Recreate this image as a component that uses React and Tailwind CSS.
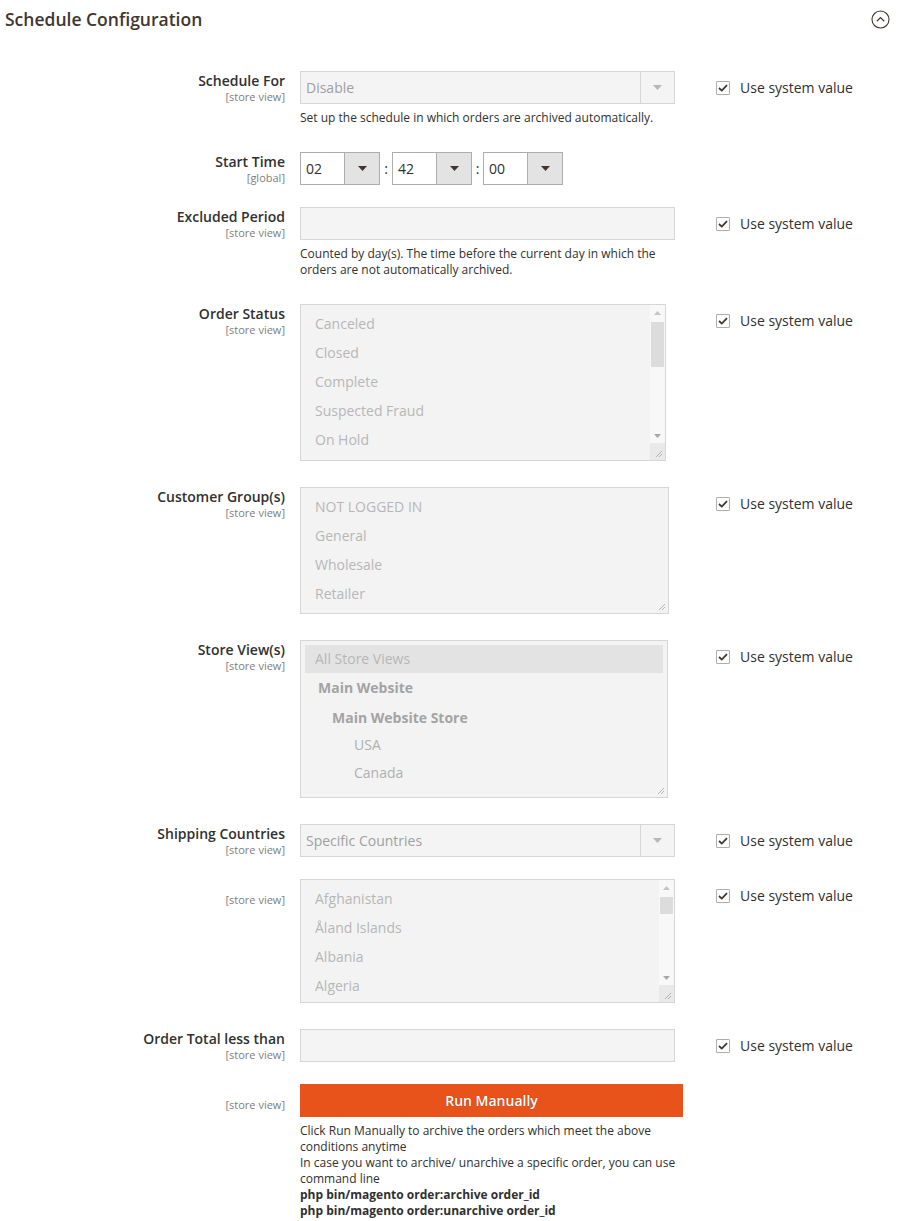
import React from 'react';

const Caret = ({ color = '#41362f', up = false }) => (
  <svg width="9" height="5" viewBox="0 0 9 5" className={up ? 'rotate-180' : ''}>
    <path d="M0 0 L9 0 L4.5 5 Z" fill={color} />
  </svg>
);

const Grip = () => (
  <svg width="9" height="9" viewBox="0 0 9 9" className="absolute bottom-[2px] right-[2px]">
    <path d="M8 2 L2 8 M8 5 L5 8" stroke="#b5b5b5" strokeWidth="1" />
  </svg>
);

const UseSystem = () => (
  <div className="ml-[33px] pt-[8px] flex items-center gap-[10px] shrink-0">
    <div className="w-[14px] h-[14px] border border-[#adadad] rounded-[1px] bg-white flex items-center justify-center">
      <svg width="10" height="8" viewBox="0 0 10 8">
        <path d="M1 4 L3.8 6.6 L9 1.2" fill="none" stroke="#41362f" strokeWidth="1.8" />
      </svg>
    </div>
    <span className="text-[14px] leading-[18px] text-[#303030]">Use system value</span>
  </div>
);

const Row = ({ label, scope, mt, check = true, children }) => (
  <div className="flex items-start" style={{ marginTop: mt }}>
    <div className="w-[285px] shrink-0 text-right pt-[1px]">
      {label ? (
        <div className="text-[14px] leading-[18px] font-semibold text-[#303030]">{label}</div>
      ) : (
        <div className="h-[13px]" />
      )}
      <div className="text-[11px] leading-[14px] text-[#808080]">[{scope}]</div>
    </div>
    <div className="ml-[15px] w-[383px] shrink-0">{children}</div>
    {check && <UseSystem />}
  </div>
);

const DisabledSelect = ({ value }) => (
  <div className="w-[375px] h-[33px] border border-[#d6d6d6] bg-[#f4f4f4] flex">
    <div className="flex-1 px-[5px] text-[14px] leading-[31px] text-[#a0a0a0]">{value}</div>
    <div className="w-[34px] border-l border-[#d6d6d6] flex items-center justify-center">
      <Caret color="#b8b8b8" />
    </div>
  </div>
);

const TimeSelect = ({ value }) => (
  <div className="w-[80px] h-[33px] border border-[#adadad] bg-white flex">
    <div className="flex-1 pl-[5px] text-[14px] leading-[31px] text-[#303030]">{value}</div>
    <div className="w-[35px] bg-[#e3e3e3] border-l border-[#adadad] flex items-center justify-center">
      <Caret color="#41362f" />
    </div>
  </div>
);

const Note = ({ children }) => (
  <div className="mt-[6px] text-[12px] leading-[16px] text-[#303030] whitespace-nowrap">{children}</div>
);

const Scrollbar = ({ thumb, thumbTop }) => (
  <div className="w-[15px] flex flex-col bg-[#f8f8f8]">
    <div className="h-[15px] flex items-center justify-center">
      <svg width="7" height="4" viewBox="0 0 7 4"><path d="M0 4 L7 4 L3.5 0 Z" fill="#c4c4c4" /></svg>
    </div>
    <div className="mx-[1px] bg-[#dcdcdc]" style={{ height: thumb, marginTop: thumbTop }} />
    <div className="flex-1" />
    <div className="h-[15px] flex items-center justify-center">
      <svg width="7" height="4" viewBox="0 0 7 4"><path d="M0 0 L7 0 L3.5 4 Z" fill="#a8a8a8" /></svg>
    </div>
    <div className="h-[17px] bg-[#e9e9e9]" />
  </div>
);

const Option = ({ children }) => (
  <div className="h-[29px] leading-[29px] pl-[14px] text-[14px] text-[#b7b7b7] whitespace-nowrap">{children}</div>
);

export default function App() {
  return (
    <div className="w-[901px] min-h-[1221px] bg-white font-['Open_Sans',sans-serif] text-[#303030]">
      <div className="h-[38px] flex items-center justify-between pl-[5px] pr-[11px]">
        <h2 className="text-[17.5px] font-semibold text-[#41362f]">Schedule Configuration</h2>
        <svg width="19" height="19" viewBox="0 0 19 19">
          <circle cx="9.5" cy="9.5" r="8.5" fill="none" stroke="#41362f" strokeWidth="1.1" />
          <path d="M5.8 11.2 L9.5 7.6 L13.2 11.2" fill="none" stroke="#41362f" strokeWidth="1.2" />
        </svg>
      </div>

      <Row label="Schedule For" scope="store view" mt={33}>
        <DisabledSelect value="Disable" />
        <Note>Set up the schedule in which orders are archived automatically.</Note>
      </Row>

      <Row label="Start Time" scope="global" mt={26} check={false}>
        <div className="flex items-center">
          <TimeSelect value="02" />
          <span className="w-[12px] text-center text-[14px]">:</span>
          <TimeSelect value="42" />
          <span className="w-[11px] text-center text-[14px]">:</span>
          <TimeSelect value="00" />
        </div>
      </Row>

      <Row label="Excluded Period" scope="store view" mt={22}>
        <div className="w-[375px] h-[33px] border border-[#d6d6d6] bg-[#f4f4f4]" />
        <Note>
          Counted by day(s). The time before the current day in which the
          <br />
          orders are not automatically archived.
        </Note>
      </Row>

      <Row label="Order Status" scope="store view" mt={26}>
        <div className="relative w-[366px] h-[157px] border border-[#d6d6d6] bg-[#f3f3f3] flex">
          <div className="flex-1 pt-[4px]">
            {['Canceled', 'Closed', 'Complete', 'Suspected Fraud', 'On Hold'].map((o) => (
              <Option key={o}>{o}</Option>
            ))}
          </div>
          <Scrollbar thumb={45} thumbTop={2} />
          <Grip />
        </div>
      </Row>

      <Row label="Customer Group(s)" scope="store view" mt={26}>
        <div className="relative w-[369px] h-[127px] border border-[#d6d6d6] bg-[#f3f3f3] pt-[4px]">
          {['NOT LOGGED IN', 'General', 'Wholesale', 'Retailer'].map((o) => (
            <Option key={o}>{o}</Option>
          ))}
          <Grip />
        </div>
      </Row>

      <Row label="Store View(s)" scope="store view" mt={26}>
        <div className="relative w-[368px] h-[158px] border border-[#d6d6d6] bg-[#f3f3f3] px-[4px] pt-[4px] text-[14px]">
          <div className="h-[28px] leading-[28px] pl-[10px] bg-[#e3e3e3] text-[#b7b7b7]">All Store Views</div>
          <div className="h-[30px] leading-[30px] pl-[13px] font-bold text-[#a3a3a3]">Main Website</div>
          <div className="h-[29px] leading-[29px] pl-[27px] font-bold text-[#a3a3a3]">Main Website Store</div>
          <div className="h-[26px] leading-[26px] pl-[49px] text-[#b0b0b0]">USA</div>
          <div className="h-[30px] leading-[30px] pl-[49px] text-[#b0b0b0]">Canada</div>
          <Grip />
        </div>
      </Row>

      <Row label="Shipping Countries" scope="store view" mt={26}>
        <DisabledSelect value="Specific Countries" />
      </Row>

      <Row label="" scope="store view" mt={22}>
        <div className="relative w-[375px] h-[124px] border border-[#d6d6d6] bg-[#f3f3f3] flex">
          <div className="flex-1 pt-[4px]">
            {['Afghanistan', 'Åland Islands', 'Albania', 'Algeria'].map((o) => (
              <Option key={o}>{o}</Option>
            ))}
          </div>
          <Scrollbar thumb={17} thumbTop={2} />
          <Grip />
        </div>
      </Row>

      <Row label="Order Total less than" scope="store view" mt={26}>
        <div className="w-[375px] h-[33px] border border-[#d6d6d6] bg-[#f4f4f4]" />
      </Row>

      <Row label="" scope="store view" mt={22} check={false}>
        <button className="w-[383px] h-[33px] bg-[#e8521b] text-white text-[14px] font-semibold [text-shadow:0_0_1px_rgba(0,0,0,0.3)]">
          Run Manually
        </button>
        <Note>
          Click Run Manually to archive the orders which meet the above
          <br />
          conditions anytime
          <br />
          In case you want to archive/ unarchive a specific order, you can use
          <br />
          command line
          <br />
          <b>php bin/magento order:archive order_id</b>
          <br />
          <b>php bin/magento order:unarchive order_id</b>
        </Note>
      </Row>
    </div>
  );
}
